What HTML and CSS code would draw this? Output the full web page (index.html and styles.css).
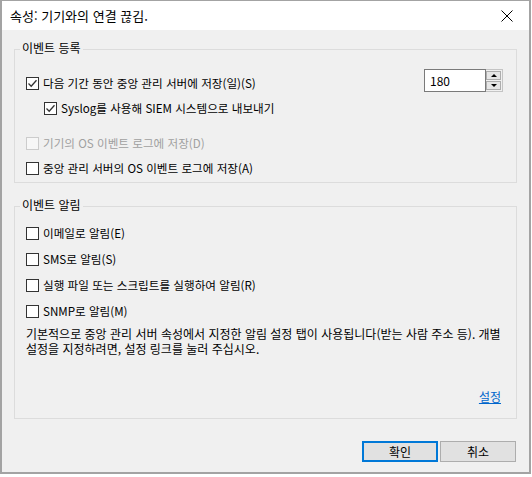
FILE: index.html
```html
<!DOCTYPE html>
<html lang="ko">
<head>
    <meta charset="UTF-8">
    <meta name="viewport" content="width=device-width, initial-scale=1.0">
    <title>속성: 기기와의 연결 끊김.</title>
    <link rel="stylesheet" href="styles.css">
</head>
<body>

<div class="window">
    <!-- Title bar -->
    <div class="titlebar">
        <span class="title">속성: 기기와의 연결 끊김.</span>
        <svg class="close" width="12" height="12" viewBox="0 0 12 12">
            <path d="M0.5 0.5 L11.5 11.5 M11.5 0.5 L0.5 11.5" stroke="#000" stroke-width="1" fill="none"/>
        </svg>
    </div>

    <div class="dialog-body">
        <!-- Event logging -->
        <div class="group group-log">
            <div class="legend">이벤트 등록</div>
            <div class="row row-keep">
                <label class="opt opt-keep">
                    <span class="cb checked"><svg width="11" height="11" viewBox="0 0 11 11"><path d="M1.5 5.5 L4.2 8.2 L9.5 2.2" stroke="#333" stroke-width="1.3" fill="none"/></svg></span>
                    다음 기간 동안 중앙 관리 서버에 저장(일)(S)
                </label>
                <div class="spinner">
                    <div class="spin-value">180</div>
                    <div class="spin-btns">
                        <span class="spin-btn"><span class="arrow-up"></span></span>
                        <span class="spin-btn"><span class="arrow-down"></span></span>
                    </div>
                </div>
            </div>
            <label class="opt opt-sub">
                <span class="cb checked"><svg width="11" height="11" viewBox="0 0 11 11"><path d="M1.5 5.5 L4.2 8.2 L9.5 2.2" stroke="#333" stroke-width="1.3" fill="none"/></svg></span>
                Syslog를 사용해 SIEM 시스템으로 내보내기
            </label>
            <label class="opt opt-disabled">
                <span class="cb"></span>
                기기의 OS 이벤트 로그에 저장(D)
            </label>
            <label class="opt opt-last">
                <span class="cb"></span>
                중앙 관리 서버의 OS 이벤트 로그에 저장(A)
            </label>
        </div>

        <!-- Event notification -->
        <div class="group group-notify">
            <div class="legend">이벤트 알림</div>
            <label class="opt opt-notify"><span class="cb"></span>이메일로 알림(E)</label>
            <label class="opt opt-notify"><span class="cb"></span>SMS로 알림(S)</label>
            <label class="opt opt-notify"><span class="cb"></span>실행 파일 또는 스크립트를 실행하여 알림(R)</label>
            <label class="opt opt-notify"><span class="cb"></span>SNMP로 알림(M)</label>
            <p class="note">기본적으로 중앙 관리 서버 속성에서 지정한 알림 설정 탭이 사용됩니다(받는 사람 주소 등). 개별 설정을 지정하려면, 설정 링크를 눌러 주십시오.</p>
            <div class="link-row"><a href="#" class="link">설정</a></div>
        </div>

        <div class="buttons">
            <button class="btn btn-default">확인</button>
            <button class="btn">취소</button>
        </div>
    </div>
</div>

</body>
</html>
```

FILE: styles.css
```css
/* Page */
body {
    margin: 0;
    background-color: #fff;
    font-family: "Noto Sans CJK KR", "Noto Sans", sans-serif;
    font-size: 12px;
    color: #000;
}
/* Window frame */
.window {
    width: 531px;
    height: 474px;
    box-sizing: border-box;
    border: 2px solid #a3a3a3;
    border-top-width: 1px;
    display: flex;
    flex-direction: column;
    background-color: #f0f0f0;
}
.titlebar {
    height: 29px;
    background-color: #fff;
    display: flex;
    align-items: center;
    justify-content: space-between;
    padding: 0 16px 0 8px;
    flex-shrink: 0;
}
.title {
    font-size: 13px;
}
.dialog-body {
    flex: 1;
    display: flex;
    flex-direction: column;
    padding: 19px 12px 0 12px;
}
/* Group boxes */
.group {
    border: 1px solid #dcdcdc;
    box-sizing: border-box;
    display: flex;
    flex-direction: column;
    padding: 0 11px;
}
.group-log {
    height: 134px;
}
.group-notify {
    height: 213px;
    margin-top: 23px;
}
.legend {
    width: fit-content;
    line-height: 14px;
    margin: -9px 0 0 -6px;
    padding: 0 2px;
    background-color: #f0f0f0;
}
/* Checkbox rows */
.opt {
    display: flex;
    align-items: center;
    font-size: 11.6px;
    line-height: 14px;
    white-space: nowrap;
}
.cb {
    width: 13px;
    height: 13px;
    box-sizing: border-box;
    border: 1px solid #333;
    background-color: #fff;
    margin-right: 4px;
    display: flex;
    align-items: center;
    justify-content: center;
    flex-shrink: 0;
}
.row-keep {
    display: flex;
    justify-content: space-between;
    align-items: flex-start;
    margin-top: 14px;
    margin-right: 2px;
}
.opt-keep {
    padding-top: 7px;
}
.opt-sub {
    margin-top: 9px;
    padding-left: 18px;
}
.opt-disabled {
    margin-top: 21px;
    color: #a0a0a0;
}
.opt-disabled .cb {
    border-color: #cccccc;
    background-color: #f7f7f7;
}
.opt-last {
    margin-top: 11px;
}
.opt-notify {
    margin-top: 12px;
}
.opt-notify:first-of-type {
    margin-top: 14px;
}
/* Numeric up-down */
.spinner {
    display: flex;
    height: 23px;
}
.spin-value {
    width: 62px;
    box-sizing: border-box;
    border: 1px solid #7a7a7a;
    background-color: #fff;
    padding-left: 5px;
    line-height: 21px;
}
.spin-btns {
    width: 17px;
    box-sizing: border-box;
    border: 1px solid #c4c4c4;
    border-left: none;
    display: flex;
    flex-direction: column;
    gap: 1px;
    padding: 1px 1px 1px 0;
}
.spin-btn {
    flex: 1;
    background-color: #e6e6e6;
    border: 1px solid #adadad;
    display: flex;
    align-items: center;
    justify-content: center;
}
.arrow-up {
    border-left: 3px solid transparent;
    border-right: 3px solid transparent;
    border-bottom: 3px solid #000;
}
.arrow-down {
    border-left: 3px solid transparent;
    border-right: 3px solid transparent;
    border-top: 3px solid #000;
}
/* Notification note and link */
.note {
    margin: 8px 0 0 0;
    line-height: 15px;
}
.link-row {
    margin-top: auto;
    margin-bottom: 13px;
    padding-right: 4px;
    text-align: right;
}
.link {
    color: #0066cc;
    line-height: 14px;
}
/* Dialog buttons */
.buttons {
    display: flex;
    justify-content: flex-end;
    gap: 2px;
    margin-top: 22px;
    padding-right: 1px;
}
.btn {
    width: 76px;
    height: 21px;
    box-sizing: border-box;
    background-color: #e1e1e1;
    border: 1px solid #adadad;
    font-family: inherit;
    font-size: 12px;
    padding: 0;
}
.btn-default {
    border: 2px solid #0078d7;
}
```
